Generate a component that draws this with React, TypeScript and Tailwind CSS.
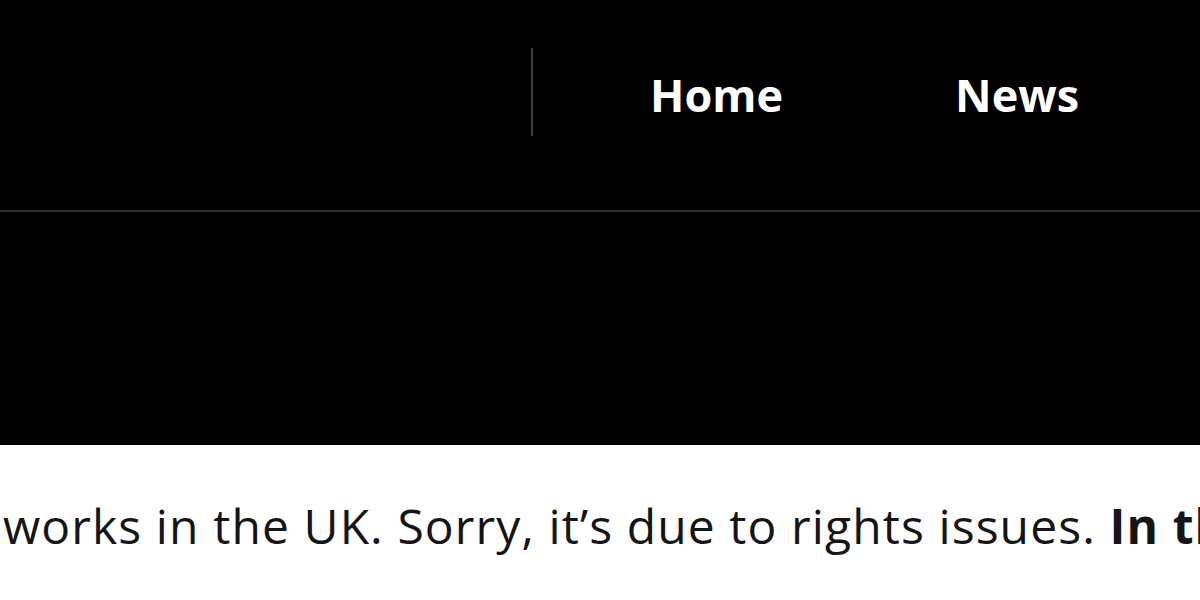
export default function App() {
  return (
    <div className="h-[600px] w-[1200px] overflow-hidden bg-white font-['Open_Sans',sans-serif]">
      <header className="bg-black">
        <div className="flex h-[212px] items-start border-b-2 border-[#2e2e2e]">
          <div className="ml-[531px] mt-[48px] h-[88px] w-[2px] bg-[#3c3c3c]" />
          <nav className="ml-[117px] mt-[72px] flex gap-[172px] text-[45px] font-bold leading-none text-white">
            <a href="#">Home</a>
            <a href="#">News</a>
          </nav>
        </div>
        <div className="h-[233px]" />
      </header>

      <p className="mt-[53px] whitespace-nowrap pl-[3px] text-[48px] leading-[56px] tracking-[1.1px] text-[#151515]">
        works in the UK. Sorry, it’s due to rights issues. <strong className="font-bold">In th</strong>
      </p>
    </div>
  );
}
